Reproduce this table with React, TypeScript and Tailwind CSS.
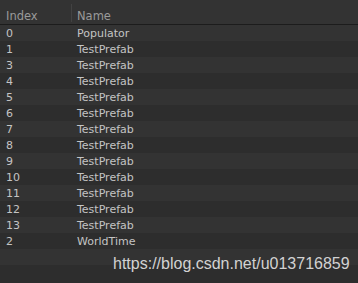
import React from "react";

const rows: [string, string][] = [
  ["0", "Populator"],
  ["1", "TestPrefab"],
  ["3", "TestPrefab"],
  ["4", "TestPrefab"],
  ["5", "TestPrefab"],
  ["6", "TestPrefab"],
  ["7", "TestPrefab"],
  ["8", "TestPrefab"],
  ["9", "TestPrefab"],
  ["10", "TestPrefab"],
  ["11", "TestPrefab"],
  ["12", "TestPrefab"],
  ["13", "TestPrefab"],
  ["2", "WorldTime"],
  ["", ""],
  ["", ""],
];

export default function App() {
  return (
    <div
      className="relative w-[358px] h-[283px] overflow-hidden bg-[#2d2d2d] text-[11px] leading-none"
      style={{ fontFamily: '"DejaVu Sans", "Liberation Sans", sans-serif' }}
    >
      <div className="flex h-[25px] border-b border-[#1c1c1c] bg-[#333333] text-[#9a9a9a] text-[11.5px]">
        <div className="flex h-full w-[72px] items-center">
          <span className="pl-[6px] pt-[9px]">Index</span>
        </div>
        <div className="flex h-full items-center">
          <span className="pl-[5px] pt-[9px]">Name</span>
        </div>
      </div>
      <div className="absolute left-[71px] top-[4px] h-[18px] w-px bg-[#424242]" />
      <div>
        {rows.map(([i, n], k) => (
          <div
            key={k}
            className={`flex h-4 items-center pt-px text-[#c4c4c4] ${k % 2 === 0 ? "bg-[#333333]" : "bg-[#2d2d2d]"}`}
          >
            <span className="w-[77px] pl-[6px]">{i}</span>
            <span>{n}</span>
          </div>
        ))}
      </div>
      <div
        className="absolute left-[113px] top-[256px] text-[16px] leading-none text-[#d2d2d2]"
        style={{ fontFamily: '"Liberation Sans", Arial, sans-serif' }}
      >
        https://blog.csdn.net/u013716859
      </div>
    </div>
  );
}
